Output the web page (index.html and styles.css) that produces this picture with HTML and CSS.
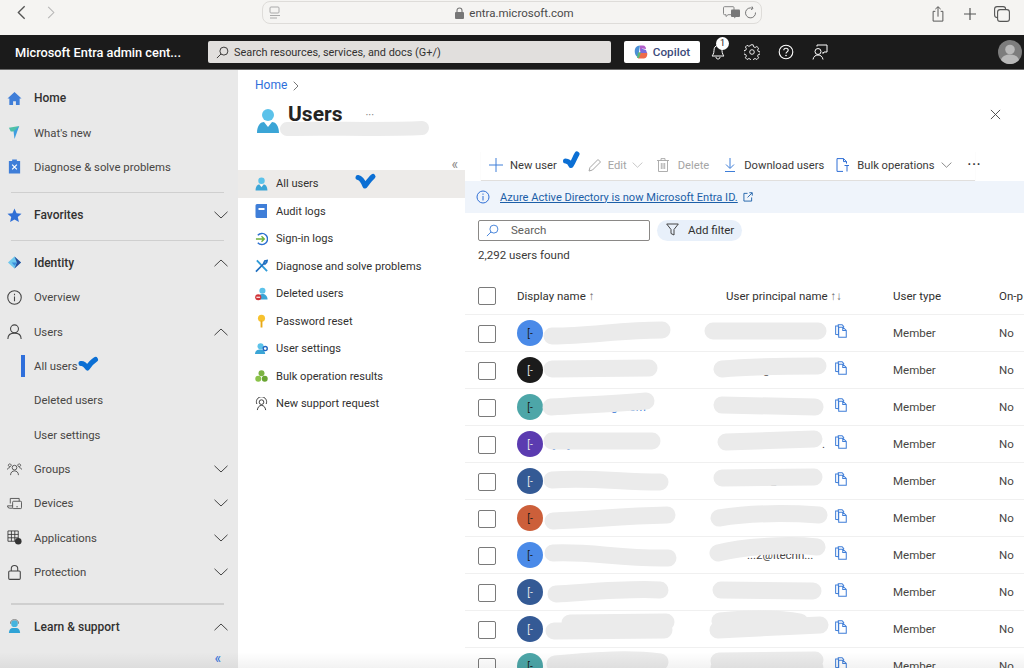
FILE: index.html
```html
<!DOCTYPE html>
<html lang="en">
<head>
<meta charset="utf-8">
<title>Users - Microsoft Entra admin center</title>
<link rel="stylesheet" href="styles.css">
</head>
<body>
<svg class="sprite" width="0" height="0" aria-hidden="true">
  <symbol id="down" viewBox="0 0 14 8"><path d="M.5.8 7 7 13.5.8" fill="none" stroke="currentColor" stroke-width="1"/></symbol>
  <symbol id="up" viewBox="0 0 14 8"><path d="M.5 7.2 7 1l6.5 6.2" fill="none" stroke="currentColor" stroke-width="1"/></symbol>
  <symbol id="copy" viewBox="0 0 13 15"><path d="M3.5 3V.7h4.2l2.1 2.3M.7 2.2h3v9.3H3.4L.7 11ZM4 3.4h4.6l3.6 3.4v7.5H4Zm4.4 0v3.6h3.8" fill="none" stroke="#3f7ed8" stroke-width="1.1"/></symbol>
  <symbol id="person" viewBox="0 0 24 26"><circle cx="12" cy="7" r="6" fill="#5cc2ea"/><path d="M1 25c0-8 4-11 7-11l4 5 4-5c3 0 7 3 7 11Z" fill="#3ba5d6"/><path d="m9.500 14 2.500 3.200 2.500-3.200Z" fill="#fff"/></symbol>
</svg>

<div class="page">
  <header class="browser">
    <div class="browser-nav">
      <svg class="ic-back" viewBox="0 0 10 16"><path d="M8.500 1 1.500 8l7 7" fill="none" stroke="#555" stroke-width="1.500"/></svg>
      <svg class="ic-back" viewBox="0 0 10 16"><path d="M1.500 1l7 7-7 7" fill="none" stroke="#b5b5b5" stroke-width="1.300"/></svg>
    </div>
    <div class="url">
      <svg class="ic-14 url-page" viewBox="0 0 14 14"><rect x="2" y="1" width="9" height="6" rx="1" fill="none" stroke="#aaa"/><path d="M2 9.500h10M2 12h7" stroke="#aaa"/></svg>
      <div class="url-center">
        <svg class="ic-lock" viewBox="0 0 9 12"><path d="M2 5V3.500a2.500 2.500 0 0 1 5 0V5" fill="none" stroke="#777" stroke-width="1.100"/><rect y="5" width="9" height="7" rx="1" fill="#777"/></svg>
        <span>entra.microsoft.com</span>
      </div>
      <svg class="ic-translate" viewBox="0 0 17 13"><path d="M1.500.7h8.500a1 1 0 0 1 1 1v6a1 1 0 0 1-1 1H5L3 10.500V8.700H1.500a1 1 0 0 1-1-1v-6a1 1 0 0 1 1-1Z" fill="none" stroke="#888"/><rect x="8" y="3.500" width="9" height="7.500" rx="1" fill="#777"/><path d="m11 10 .5 2.500 2-2.500" fill="#777"/></svg>
      <svg class="ic-14" viewBox="0 0 14 14"><path d="M11.500 6.500a5 5 0 1 1-3-4.200M8 .5l1 2-2 1.200" fill="none" stroke="#777"/></svg>
    </div>
    <div class="browser-actions">
      <svg class="ic-16" viewBox="0 0 16 18"><path d="M5 6H2.500v11h11V6H11M8 12V1M5 3.500 8 .8l3 2.700" fill="none" stroke="#555" stroke-width="1.100"/></svg>
      <svg class="ic-16" viewBox="0 0 16 16"><path d="M8 2v12M2 8h12" stroke="#555" stroke-width="1.200"/></svg>
      <svg class="ic-16" viewBox="0 0 16 16"><rect x=".6" y=".6" width="11" height="11" rx="2.500" fill="none" stroke="#555" stroke-width="1.100"/><rect x="3.600" y="3.600" width="11.800" height="11.800" rx="2.500" fill="#f5f4f2" stroke="#555" stroke-width="1.100"/></svg>
    </div>
  </header>

  <div class="topbar">
    <div class="brand">Microsoft Entra admin cent...</div>
    <div class="global-search">
      <svg class="ic-13" viewBox="0 0 14 14"><circle cx="8.500" cy="5.500" r="4.300" fill="none" stroke="#323130"/><path d="M5.500 8.500 1 13" stroke="#323130"/></svg>
      <span>Search resources, services, and docs (G+/)</span>
    </div>
    <div class="copilot">
      <svg class="ic-14" viewBox="0 0 14 14"><path d="M1 4c1-3 3-3.500 5-3.500L5 7l-1 5C2 12 0 8 1 4Z" fill="#4b8fd6"/><path d="M6 .5h3c2 0 3 2 3 3.500L8 3.500 6 7Z" fill="#b05dc9"/><path d="M5 7.500h8c1 3-1 6-3 6H4Z" fill="#ee6a4a"/><path d="M7 3.500 12 5 13 8H6Z" fill="#7a6bd8"/><path d="M4 7.500h3L5 13H3Z" fill="#5bb77a"/></svg>
      <span>Copilot</span>
    </div>
    <div class="top-icons">
      <div class="bell">
        <svg class="ic-16" viewBox="0 0 16 16"><path d="M8 1.500C5 1.500 4 4 4 6.500c0 3-1.500 5-2 5.500h12c-.5-.5-2-2.500-2-5.500C12 4 11 1.500 8 1.500ZM6 13c0 1.500 1 2 2 2s2-.5 2-2" fill="none" stroke="#fff"/></svg>
        <span class="badge">1</span>
      </div>
      <svg class="ic-16" viewBox="0 0 16 16"><circle cx="8" cy="8" r="2.300" fill="none" stroke="#fff" stroke-width=".9"/><path d="M6.800.8h2.400l.4 2 1.500.7 1.800-1 1.700 1.700-1 1.800.7 1.500 2 .4v2.200l-2 .4-.7 1.500 1 1.800-1.700 1.700-1.800-1-1.500.7-.4 2H6.800l-.4-2-1.500-.7-1.800 1-1.700-1.700 1-1.800-.7-1.500-2-.4V6.700l2-.4.7-1.500-1-1.800 1.700-1.700 1.800 1 1.500-.7Z" fill="none" stroke="#fff" stroke-width=".9"/></svg>
      <svg class="ic-16" viewBox="0 0 16 16"><circle cx="8" cy="8" r="6.800" fill="none" stroke="#fff" stroke-width="1.100"/><path d="M5.800 6.200C5.800 5 6.800 4.200 8 4.200s2.200.8 2.200 2c0 1.700-2.200 1.700-2.200 3.400" fill="none" stroke="#fff" stroke-width="1.100"/><circle cx="8" cy="11.500" r=".8" fill="#fff"/></svg>
      <svg class="ic-16" viewBox="0 0 16 16"><circle cx="6" cy="7.500" r="3" fill="none" stroke="#fff"/><path d="M1 15.500c.5-3 2.500-4.500 5-4.500s4.500 1.500 5 4.500M5 2.500V1h10v7h-3l-1 1.500V8" fill="none" stroke="#fff"/></svg>
    </div>
    <div class="avatar-me">
      <svg viewBox="0 0 24 24"><circle cx="12" cy="12" r="12" fill="#7d7d7d"/><circle cx="12" cy="9.500" r="4.800" fill="#b9b9b9"/><path d="M3 20c1-4 5-5.500 9-5.500s8 1.500 9 5.500a12 12 0 0 1-18 0Z" fill="#b9b9b9"/></svg>
    </div>
  </div>

  <div class="main">
    <nav class="nav">
      <a class="nav-row strong"><svg class="nav-ic" viewBox="0 0 16 16"><path d="M8 1 .5 8h2v7h4v-4h3v4h4V8h2Z" fill="#3f7ed8"/></svg><span>Home</span></a>
      <a class="nav-row"><svg class="nav-ic" viewBox="0 0 16 16"><path d="m2 3 11-2-3 6H4Z" fill="#4fc0a8"/><path d="m13 1-5 14-1-8Z" fill="#3f9ee0"/></svg><span>What's new</span></a>
      <a class="nav-row"><svg class="nav-ic" viewBox="0 0 14 16"><path d="M1 2h3.500V.5h5V2H13v13.500H1Z" fill="#3f7ed8"/><path d="m4.500 6 5 5m0-5-5 5" stroke="#fff" stroke-width="1.300"/></svg><span>Diagnose &amp; solve problems</span></a>
      <hr class="nav-rule rule-a">
      <a class="nav-row strong"><svg class="nav-ic" viewBox="0 0 16 16"><path d="m8 .5 2.200 5 5.300.5-4 3.500 1.200 5.500L8 12.200 3.300 15l1.200-5.500-4-3.500 5.300-.5Z" fill="#2f6fd6"/></svg><span>Favorites</span><svg class="chev"><use href="#down"/></svg></a>
      <hr class="nav-rule rule-b">
      <a class="nav-row strong"><svg class="nav-ic" viewBox="0 0 16 16"><path d="M8 1.500 1 8l7 6.500L15 8Z" fill="#6fc8ee"/><path d="M8 1.500 15 8 8 14.500l2.500-6.500Z" fill="#2a4f9c"/><path d="M5 8h6l-3 3.500Z" fill="#3b8edc"/></svg><span>Identity</span><svg class="chev"><use href="#up"/></svg></a>
      <a class="nav-row"><svg class="nav-ic" viewBox="0 0 14 14"><circle cx="7" cy="7" r="6.300" fill="none" stroke="#444"/><path d="M7 6v4.500M7 3.500v1.300" stroke="#444"/></svg><span>Overview</span></a>
      <a class="nav-row"><svg class="nav-ic" viewBox="0 0 14 14"><circle cx="7" cy="4.500" r="3.700" fill="none" stroke="#444"/><path d="M.8 14c0-3.500 2.500-5.500 6.200-5.500s6.200 2 6.200 5.500" fill="none" stroke="#444"/></svg><span>Users</span><svg class="chev"><use href="#up"/></svg></a>
      <a class="nav-row sub current"><span>All users</span></a>
      <a class="nav-row sub"><span>Deleted users</span></a>
      <a class="nav-row sub"><span>User settings</span></a>
      <a class="nav-row"><svg class="nav-ic" viewBox="0 0 16 14"><circle cx="8" cy="5" r="2.500" fill="none" stroke="#444" stroke-width=".9"/><path d="M3.800 13c0-3 2-4.500 4.200-4.500s4.200 1.500 4.200 4.500M3 1a1.500 1.500 0 1 1-.1 0M.5 7c.3-1.500 1.200-2 2.500-2M13 1a1.500 1.500 0 1 0 .1 0M15.500 7c-.3-1.500-1.200-2-2.500-2" fill="none" stroke="#444" stroke-width=".9"/></svg><span>Groups</span><svg class="chev"><use href="#down"/></svg></a>
      <a class="nav-row"><svg class="nav-ic" viewBox="0 0 16 12"><path d="M3.500 6V.6H13v3M6 11H3A2.500 2.500 0 0 1 .5 8.500H6" fill="none" stroke="#444" stroke-width=".9"/><rect x="6" y="3.600" width="9.500" height="7.800" rx="1" fill="none" stroke="#444" stroke-width=".9"/><path d="M10 9.500h1.500" stroke="#444"/></svg><span>Devices</span><svg class="chev"><use href="#down"/></svg></a>
      <a class="nav-row"><svg class="nav-ic" viewBox="0 0 16 16"><path d="M1 1h11v11H1ZM4.700 1v11M8.300 1v11M1 4.700h11M1 8.300h11" fill="none" stroke="#333" stroke-width=".9"/><circle cx="12" cy="12" r="3.500" fill="#333"/></svg><span>Applications</span><svg class="chev"><use href="#down"/></svg></a>
      <a class="nav-row"><svg class="nav-ic" viewBox="0 0 12 14"><rect x=".6" y="5.600" width="10.800" height="7.800" rx="1" fill="none" stroke="#444"/><path d="M3 5.500V3.500a3 3 0 0 1 6 0v2" fill="none" stroke="#444"/></svg><span>Protection</span><svg class="chev"><use href="#down"/></svg></a>
      <hr class="nav-rule rule-c">
      <a class="nav-row strong"><svg class="nav-ic" viewBox="0 0 14 16"><circle cx="7" cy="5" r="3.600" fill="#46b4de"/><path d="M2.700 5a4.300 4.300 0 0 1 8.600 0" fill="none" stroke="#777"/><path d="M1 15c0-3.500 2-5.500 4-5.500h4c2 0 4 2 4 5.500Z" fill="#2fa3d6"/></svg><span>Learn &amp; support</span><svg class="chev"><use href="#up"/></svg></a>
      <div class="nav-foot">«</div>
    </nav>

    <section class="content">
      <div class="crumb"><a>Home</a><svg viewBox="0 0 6 10"><path d="m.7.7 4.300 4.300-4.300 4.300" fill="none" stroke="#777"/></svg></div>
      <div class="title-row">
        <svg class="title-ic"><use href="#person"/></svg>
        <h1>Users</h1>
        <span class="title-more">···</span>
        <svg class="close" viewBox="0 0 12 12"><path d="m1 1 10 10m0-10L1 11" stroke="#444"/></svg>
      </div>

      <div class="blade">
        <aside class="menu">
          <div class="menu-collapse">«</div>
          <a class="menu-row selected"><svg class="menu-ic"><use href="#person"/></svg><span>All users</span></a>
          <a class="menu-row"><svg class="menu-ic" viewBox="0 0 12 14"><path d="M1.500 0H11.500V14H1.500A1.500 1.500 0 0 1 0 12.500V1.500A1.500 1.500 0 0 1 1.500 0Z" fill="#3f7ed8"/><path d="M3 4h6v2H3Z" fill="#fff"/></svg><span>Audit logs</span></a>
          <a class="menu-row"><svg class="menu-ic" viewBox="0 0 14 14"><path d="M3 3a6 6 0 1 1 0 8" fill="none" stroke="#2a6fd0" stroke-width="1.500"/><path d="M1 7h9M7 4l3 3-3 3" fill="none" stroke="#6eb03c" stroke-width="1.500"/></svg><span>Sign-in logs</span></a>
          <a class="menu-row"><svg class="menu-ic" viewBox="0 0 14 14"><path d="m2 1 11 11.500" stroke="#2f9bd8" stroke-width="2"/><path d="M1 13 9 5l1.500-3.500L13 1l-.5 2L10 5.500" fill="none" stroke="#1f6fc0" stroke-width="1.800"/></svg><span>Diagnose and solve problems</span></a>
          <a class="menu-row"><svg class="menu-ic" viewBox="0 0 14 14"><circle cx="8" cy="3.500" r="3.300" fill="#5cc2ea"/><path d="M3 13c0-4 2-6 5-6s5.500 2 5.500 6Z" fill="#3ba5d6"/><circle cx="3.500" cy="10.500" r="3.300" fill="#d13438"/><path d="M1.500 10.500h4" stroke="#fff" stroke-width="1.200"/></svg><span>Deleted users</span></a>
          <a class="menu-row"><svg class="menu-ic" viewBox="0 0 14 14"><circle cx="7" cy="4" r="3.800" fill="#f7c22f"/><path d="M6 6.500h2V14H6Z" fill="#e8a817"/></svg><span>Password reset</span></a>
          <a class="menu-row"><svg class="menu-ic" viewBox="0 0 14 14"><circle cx="6" cy="4" r="3.300" fill="#5cc2ea"/><path d="M0 12.500C0 9 2.500 7.500 6 7.500s4.500 1.500 5 5Z" fill="#3ba5d6"/><circle cx="11" cy="6.500" r="2.200" fill="none" stroke="#2065c0" stroke-width="1.500"/></svg><span>User settings</span></a>
          <a class="menu-row"><svg class="menu-ic" viewBox="0 0 14 14"><circle cx="7" cy="4" r="3.200" fill="#7cb342"/><circle cx="3.500" cy="10" r="3.200" fill="#8bc34a"/><circle cx="10.500" cy="10" r="3.200" fill="#6aa533"/></svg><span>Bulk operation results</span></a>
          <a class="menu-row"><svg class="menu-ic" viewBox="0 0 14 14"><circle cx="7" cy="5" r="2.500" fill="none" stroke="#333"/><path d="M2.500 13.500c.5-3 2-5 4.500-5s4 2 4.500 5M2 7a5.500 5.500 0 1 1 10 0" fill="none" stroke="#333"/></svg><span>New support request</span></a>
        </aside>

        <div class="pane">
          <div class="toolbar">
            <button class="tool new"><svg class="ic-14" viewBox="0 0 14 14"><path d="M7 0v14M0 7h14" stroke="#3f7ed8"/></svg><span>New user</span></button>
            <button class="tool off edit"><svg class="ic-14" viewBox="0 0 14 14"><path d="m1 13 1-3.500L10 1.500 12.500 4l-8 8Z" fill="none" stroke="#a5a5a5"/></svg><span>Edit</span><svg class="chev-s"><use href="#down"/></svg></button>
            <button class="tool off"><svg class="ic-14" viewBox="0 0 12 14"><path d="M1.500 2.500v11h9v-11M0 2.500h12M4 2.500V.6h4v1.900M4.300 5v6M6 5v6M7.700 5v6" fill="none" stroke="#a5a5a5" stroke-width=".9"/></svg><span>Delete</span></button>
            <button class="tool download"><svg class="ic-14" viewBox="0 0 12 14"><path d="M6 0v10M2 6.500 6 10.500l4-4M1 13.500h10" fill="none" stroke="#3f7ed8"/></svg><span>Download users</span></button>
            <button class="tool"><svg class="ic-14" viewBox="0 0 14 14"><path d="M1 .6h6.500l3 3v2M1 .6v12.800h6M7.500.6v3h3" fill="none" stroke="#2f6fd6"/><path d="M11 7v6.500M8.500 7.500H13" stroke="#2f6fd6"/></svg><span>Bulk operations</span><svg class="chev-s"><use href="#down"/></svg></button>
            <span class="tool-more">···</span>
          </div>

          <div class="banner">
            <svg class="ic-14" viewBox="0 0 14 14"><circle cx="7" cy="7" r="6" fill="none" stroke="#2f6fd6"/><path d="M7 6v4.500M7 3.500v1.300" stroke="#2f6fd6"/></svg>
            <a class="banner-link">Azure Active Directory is now Microsoft Entra ID.</a>
            <svg class="ic-ext" viewBox="0 0 11 11"><path d="M5 1.500H1v8.500h8.500V6M5 6l5-5M7 .8h3.200V4" fill="none" stroke="#1c5fa8"/></svg>
          </div>

          <div class="filters">
            <div class="search-box">
              <svg class="ic-13" viewBox="0 0 14 14"><circle cx="8.500" cy="5.500" r="4.300" fill="none" stroke="#3f7ed8"/><path d="M5.500 8.500 1 13" stroke="#3f7ed8"/></svg>
              <span>Search</span>
            </div>
            <div class="filter-pill">
              <svg class="ic-13" viewBox="0 0 13 13"><path d="M.7 1h11.600L8 6.500v5.500L5 10.500v-4Z" fill="none" stroke="#444"/></svg>
              <span>Add filter</span>
            </div>
          </div>
          <div class="count">2,292 users found</div>

          <div class="table">
            <div class="row head">
              <span class="check"></span>
              <span>Display name <span class="sort">↑</span></span>
              <span>User principal name <span class="sort">↑↓</span></span>
              <span>User type</span>
              <span class="clip">On-p</span>
            </div>
            <div class="row"><span class="check"></span><div class="name"><span class="avatar blue">[-</span></div><div class="upn"><span class="upn-text"></span><svg class="copy"><use href="#copy"/></svg></div><span>Member</span><span>No</span></div>
            <div class="row"><span class="check"></span><div class="name"><span class="avatar black light">[-</span><a class="frag f-g">g</a></div><div class="upn"><span class="upn-text"><span class="frag-u u-g">g</span></span><svg class="copy"><use href="#copy"/></svg></div><span>Member</span><span>No</span></div>
            <div class="row"><span class="check"></span><div class="name"><span class="avatar teal">[-</span><a class="frag f-isom">g.isom</a></div><div class="upn"><span class="upn-text"></span><svg class="copy"><use href="#copy"/></svg></div><span>Member</span><span>No</span></div>
            <div class="row"><span class="check"></span><div class="name"><span class="avatar purple light">[-</span><a class="frag f-br">[....]</a></div><div class="upn"><span class="upn-text"><span class="frag-u u-dot">.</span></span><svg class="copy"><use href="#copy"/></svg></div><span>Member</span><span>No</span></div>
            <div class="row"><span class="check"></span><div class="name"><span class="avatar navy light">[-</span></div><div class="upn"><span class="upn-text"><span class="frag-u u-at">_...</span></span><svg class="copy"><use href="#copy"/></svg></div><span>Member</span><span>No</span></div>
            <div class="row"><span class="check"></span><div class="name"><span class="avatar orange">[-</span></div><div class="upn"><span class="upn-text"></span><svg class="copy"><use href="#copy"/></svg></div><span>Member</span><span>No</span></div>
            <div class="row"><span class="check"></span><div class="name"><span class="avatar blue">[-</span></div><div class="upn"><span class="upn-text"><span class="frag-u u-tech">...2@itechn...</span></span><svg class="copy"><use href="#copy"/></svg></div><span>Member</span><span>No</span></div>
            <div class="row"><span class="check"></span><div class="name"><span class="avatar navy light">[-</span></div><div class="upn"><span class="upn-text"></span><svg class="copy"><use href="#copy"/></svg></div><span>Member</span><span>No</span></div>
            <div class="row"><span class="check"></span><div class="name"><span class="avatar navy light">[-</span></div><div class="upn"><span class="upn-text"></span><svg class="copy"><use href="#copy"/></svg></div><span>Member</span><span>No</span></div>
            <div class="row"><span class="check"></span><div class="name"><span class="avatar teal">[-</span><a class="frag f-isom2">g.isom</a></div><div class="upn"><span class="upn-text"></span><svg class="copy"><use href="#copy"/></svg></div><span>Member</span><span>No</span></div>
          </div>
        </div>
      </div>
    </section>
  </div>

  <svg class="markup" viewBox="0 0 1024 668" aria-hidden="true">
    <g class="scrub thin">
      <path d="M287 129C330 128 380 130 422 128"/>
    </g>
    <g class="scrub">
      <path d="M552 336C590 336 620 330 662 330"/>
      <path d="M713 331L818 331"/>
      <path d="M552 369L649 368"/>
      <path d="M722 369C750 366 790 366 818 366"/>
      <path d="M551 407C580 405 610 404 646 401"/>
      <path d="M722 405L815 407"/>
      <path d="M552 441L652 441"/>
      <path d="M726 442C760 441 790 440 814 439"/>
      <path d="M552 480C590 477 620 482 660 482"/>
      <path d="M722 478L814 477"/>
      <path d="M553 521C590 520 620 516 667 515"/>
      <path d="M719 518C750 513 790 513 819 515"/>
      <path d="M553 553C590 551 620 559 668 558"/>
      <path d="M718 553C745 546 790 544 817 547"/>
      <path d="M556 594C590 592 630 588 660 590"/>
      <path d="M721 590L813 591"/>
      <path d="M554 631L664 630M570 623L666 622"/>
      <path d="M718 630L820 625M720 621C750 618 780 618 800 622"/>
      <path d="M555 664C600 660 630 658 660 662"/>
      <path d="M719 661L815 660M719 668L815 668"/>
    </g>
    <g class="tick">
      <path d="M81 363.500C84 363 86 366 87.500 368C90 364 93 361 95.500 359.500"/>
      <path d="M358 177.500C361 178 363 181 365 186C368 182 370 179 373 176.500"/>
      <path d="M565.500 161C568 161 570 163 571 165.500C574 161 575 157 577 154"/>
    </g>
  </svg>
  <div class="bottom-fade"></div>
</div>
</body>
</html>
```

FILE: styles.css
```css
* { box-sizing: border-box; }
html, body { margin: 0; padding: 0; }
body {
  font-family: Roboto, "Open Sans", sans-serif;
  font-size: 11.5px;
  color: #3b3a39;
  background: #fff;
}
a { color: inherit; text-decoration: none; }
svg { display: block; flex: none; }
.sprite { position: absolute; }
.page { position: relative; width: 1024px; height: 668px; overflow: hidden; display: flex; flex-direction: column; }

.ic-14 { width: 14px; height: 14px; }
.ic-13 { width: 13px; height: 13px; }
.ic-16 { width: 16px; height: 16px; }

/* browser chrome */
.browser { flex: none; height: 35px; background: #f5f4f2; display: flex; align-items: flex-start; padding-top: 1px; }
.browser-nav { width: 262px; display: flex; gap: 21px; padding: 4px 0 0 17px; }
.ic-back { width: 9px; height: 15px; }
.ic-back + .ic-back { width: 8px; height: 13px; margin-top: 1px; }
.url { width: 500px; height: 23px; border: 1px solid #dedcd9; border-radius: 8px; display: flex; align-items: center; padding: 0 3px 0 5px; gap: 4px; color: #4a4a4a; }
.url-center { flex: 1; display: flex; align-items: center; justify-content: center; gap: 5px; font-size: 11.5px; padding-left: 24px; }
.ic-lock { width: 9px; height: 12px; }
.ic-translate { width: 17px; height: 13px; }
.browser-actions { margin-left: auto; display: flex; gap: 16px; padding: 5px 14px 0 0; }

/* top bar */
.topbar { flex: none; height: 35px; background: #1b1b1b; border-bottom: 1px solid #6b6b6b; display: flex; align-items: center; padding-left: 15px; }
.brand { width: 193px; color: #fff; font-size: 12.8px; font-weight: 500; white-space: nowrap; }
.global-search { width: 403px; height: 22px; background: #e1dfdd; border-radius: 2px; display: flex; align-items: center; gap: 5px; padding-left: 8px; color: #323130; font-size: 10.9px; }
.copilot { margin-left: 13px; width: 76px; height: 22px; background: #fff; border-radius: 2px; display: flex; align-items: center; justify-content: center; gap: 5px; color: #3b4a7a; font-weight: 500; font-size: 11.7px; }
.top-icons { margin-left: 10px; display: flex; gap: 18px; align-items: center; }
.bell { position: relative; }
.badge { position: absolute; left: 6px; top: -7px; width: 13px; height: 13px; border-radius: 50%; background: #fff; color: #1b1b1b; font-size: 9px; line-height: 13px; text-align: center; }
.avatar-me { margin-left: auto; margin-right: 2px; width: 24px; height: 24px; }

/* left nav */
.main { flex: 1; min-height: 0; display: flex; }
.nav { flex: none; width: 238px; background: #e9e9e9; padding-top: 11px; display: flex; flex-direction: column; position: relative; }
.nav-row { flex: none; height: 34.4px; display: flex; align-items: center; padding: 0 10px 0 7px; color: #484644; font-size: 11.35px; }
.nav-ic { width: 15px; height: 15px; margin-right: 12px; }
.nav-row.strong { color: #323130; font-weight: 500; font-size: 12px; }
.nav-row.sub { padding-left: 34px; position: relative; }
.nav-row.current::before { content: ""; position: absolute; left: 21px; top: 6px; bottom: 6px; width: 4px; background: #2f6fdb; }
.chev { width: 14px; height: 8px; margin-left: auto; color: #444; }
.nav-rule { flex: none; border: 0; height: 1px; background: #cfcfcf; margin: 0 14px 0 11px; }
.rule-a { margin-top: 8px; margin-bottom: 5px; }
.rule-b { margin-top: 7px; margin-bottom: 5px; }
.rule-c { margin-top: 14px; margin-bottom: 4px; height: 2px; }
.nav-foot { position: absolute; right: 17px; bottom: 3px; color: #2f6fdb; font-size: 14px; line-height: 14px; }

/* content */
.content { flex: 1; min-width: 0; display: flex; flex-direction: column; }
.crumb { flex: none; height: 29px; padding: 8px 0 0 17px; display: flex; gap: 6px; align-items: flex-start; }
.crumb a { color: #2f6fdb; font-size: 12px; line-height: 15px; }
.crumb svg { width: 6px; height: 10px; margin-top: 3px; }
.title-row { flex: none; height: 52px; display: flex; align-items: flex-start; padding: 9px 23px 0 18px; }
.title-ic { width: 24px; height: 26px; }
h1 { margin: -8px 0 0 8px; font-size: 21px; line-height: 28px; font-weight: 700; color: #252423; }
.title-more { margin-left: 23px; color: #777; font-size: 11px; line-height: 16px; }
.close { width: 11px; height: 11px; margin-left: auto; margin-top: 1px; }

.blade { flex: 1; min-height: 0; display: flex; }
.menu { flex: none; width: 227px; }
.menu-collapse { height: 19px; text-align: right; padding-right: 7px; font-size: 14px; line-height: 27px; color: #8a8886; }
.menu-row { height: 27.5px; display: flex; align-items: center; padding-left: 17px; gap: 8px; color: #323130; font-size: 11.1px; }
.menu-row.selected { background: #edebe9; }
.menu-ic { width: 13px; height: 14px; }

.pane { flex: 1; min-width: 0; }
.toolbar { height: 30px; margin: 0 49px 0 16px; padding: 0 0 1px 8px; border-bottom: 1px solid #e1dfdd; box-shadow: 0 1px 1px #eee; display: flex; align-items: center; gap: 14px; font-size: 11.2px; }
.tool { display: flex; align-items: center; gap: 7px; border: 0; padding: 0; background: none; font: inherit; color: #3b3a39; white-space: nowrap; }
.tool.new { margin-right: 17px; }
.tool.off { color: #a5a5a5; gap: 8px; }
.tool.edit { gap: 6px; margin-right: -1px; }
.tool.download { margin-right: -2px; }
.chev-s { width: 11px; height: 6px; margin-left: -1px; color: #666; }
.tool.off .chev-s { color: #b5b5b5; }
.tool-more { margin-left: 2px; font-weight: 700; font-size: 12px; color: #333; letter-spacing: 1px; }
.banner { height: 32px; background: #eff4fb; display: flex; align-items: center; padding-left: 11px; gap: 10px; }
.banner-link { color: #1c5fa8; text-decoration: underline; font-size: 11.1px; }
.ic-ext { width: 10px; height: 10px; margin-left: -5px; }
.filters { display: flex; gap: 7px; padding: 7px 0 0 13px; }
.search-box { width: 172px; height: 21px; border: 1px solid #8a8886; border-radius: 2px; display: flex; align-items: center; gap: 12px; padding: 0 0 1px 7px; color: #605e5c; }
.filter-pill { width: 85px; height: 21px; border-radius: 11px; background: #e8f0fa; display: flex; align-items: center; gap: 9px; padding: 0 0 2px 9px; color: #323130; }
.count { padding: 6px 0 0 13px; line-height: 17px; height: 23px; }

.table { margin-top: 17px; }
.row { height: 37px; display: grid; grid-template-columns: 39px 209px 167px 106px 1fr; align-items: center; padding-left: 13px; border-bottom: 1px solid #f0f0f0; white-space: nowrap; color: #484644; }
.row.head { height: 35px; margin-top: -1px; padding-bottom: 3px; color: #323130; }
.sort { color: #666; }
.check { width: 18px; height: 18px; border: 1.5px solid #7a7a7a; border-radius: 2px; background: #fff; }
.row:not(.head) .check { margin-top: 1px; }
.name { display: flex; align-items: center; }
.avatar { width: 26px; height: 26px; border-radius: 50%; display: flex; align-items: center; justify-content: center; font-size: 10px; color: #1b1b1b; flex: none; }
.avatar.light { color: #e8e8e8; }
.blue { background: #4a8ae8; }
.black { background: #1b1b1b; }
.teal { background: #4da6a8; }
.purple { background: #5b3bb0; }
.navy { background: #345a95; }
.orange { background: #cc5f3a; }
.frag { color: #3f7ed8; }
.f-g { margin-left: 73px; }
.f-isom { margin-left: 68px; }
.f-br { margin-left: 9px; }
.f-isom2 { margin-left: 79px; }
.upn { display: flex; align-items: center; }
.upn-text { width: 109px; flex: none; }
.frag-u { display: inline-block; }
.u-g { margin-left: 37px; }
.u-dot { margin-left: 96px; }
.u-at { margin-left: 45px; }
.u-tech { margin-left: 21px; }
.copy { width: 12px; height: 14px; margin-top: -4px; }

/* overlays: blurred-out names and hand-drawn ticks on the screenshot */
.markup { position: absolute; left: 0; top: 0; width: 1024px; height: 668px; pointer-events: none; }
.scrub path { fill: none; stroke: #ebebeb; stroke-width: 17px; stroke-linecap: round; stroke-linejoin: round; }
.scrub.thin path { stroke-width: 14px; }
.tick path { fill: none; stroke: #0b6fd4; stroke-width: 5px; stroke-linecap: round; stroke-linejoin: round; }
.bottom-fade { position: absolute; left: 0; right: 0; bottom: 0; height: 16px; background: linear-gradient(rgba(0,0,0,0), rgba(0,0,0,.05)); pointer-events: none; }
```
